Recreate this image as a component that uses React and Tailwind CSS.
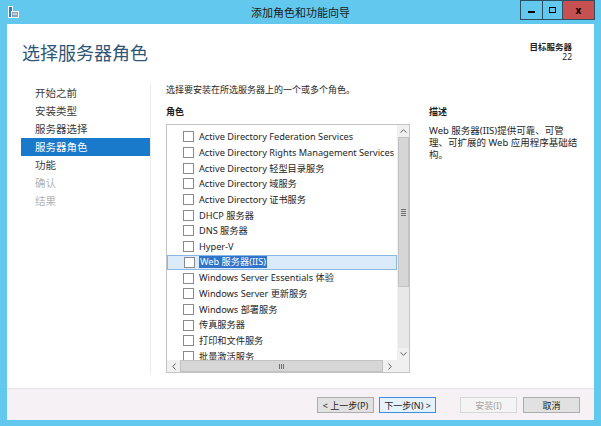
import React from 'react';

const FONT = { fontFamily: '"Noto Sans", "Noto Sans CJK SC", sans-serif' };

const navItems = [
  { label: '开始之前', state: 'normal' },
  { label: '安装类型', state: 'normal' },
  { label: '服务器选择', state: 'normal' },
  { label: '服务器角色', state: 'active' },
  { label: '功能', state: 'normal' },
  { label: '确认', state: 'disabled' },
  { label: '结果', state: 'disabled' },
];

const roles = [
  'Active Directory Federation Services',
  'Active Directory Rights Management Services',
  'Active Directory 轻型目录服务',
  'Active Directory 域服务',
  'Active Directory 证书服务',
  'DHCP 服务器',
  'DNS 服务器',
  'Hyper-V',
  'Web 服务器(IIS)',
  'Windows Server Essentials 体验',
  'Windows Server 更新服务',
  'Windows 部署服务',
  '传真服务器',
  '打印和文件服务',
  '批量激活服务',
];

const TitleBar = () => (
  <div className="relative h-[24px] flex items-center justify-center">
    {/* app icon */}
    <svg className="absolute left-[8px] top-[6px]" width="11" height="12" viewBox="0 0 11 12">
      <rect x="0.5" y="0.5" width="4" height="11" fill="#2b7fd0" stroke="#ffffff" strokeWidth="1" />
      <rect x="3.5" y="5.5" width="7" height="6" fill="#8aa3b8" stroke="#ffffff" strokeWidth="1" />
      <rect x="5" y="7.5" width="4" height="1" fill="#ffffff" />
    </svg>
    <span className="text-[11px] text-[#1a1a1a] leading-none mt-[1px]">添加角色和功能向导</span>
    <div className="absolute right-[6px] top-0 flex h-[20px]">
      <div className="w-[22px] h-full border border-[#2d4f66] border-r-0 flex items-center justify-center">
        <div className="w-[7px] h-[2px] bg-black mt-[3px]" />
      </div>
      <div className="w-[20px] h-full border border-[#2d4f66] border-r-0 flex items-center justify-center">
        <div className="w-[7px] h-[6px] border-[1.5px] border-black" />
      </div>
      <div className="w-[33px] h-full border border-[#2d4f66] bg-[#c75050] flex items-center justify-center">
        <span className="text-[10px] font-bold text-black leading-none">x</span>
      </div>
    </div>
  </div>
);

const Checkbox = () => (
  <div className="w-[11px] h-[11px] border border-[#8a8a8a] bg-white shrink-0" />
);

const RoleList = () => (
  <div className="w-[244px] h-[249px] border border-[#c4c4c4] flex flex-col">
    <div className="flex flex-1 min-h-0">
      <div className="flex-1 overflow-hidden pt-[4px]">
        {roles.map((r, i) => {
          const sel = i === 8;
          return (
            <div
              key={r}
              className={`h-[15.7px] flex items-center pl-[16px] whitespace-nowrap ${sel ? 'bg-[#dcebfa] border border-[#8ab8e6] pl-[15px]' : ''}`}
            >
              <Checkbox />
              {sel ? (
                <span className="ml-[4px] px-[1px] bg-[#3173c8] text-white text-[9.2px] leading-[12px]">{r}</span>
              ) : (
                <span className="ml-[5px] text-[9.2px] text-[#1e1e1e] leading-none">{r}</span>
              )}
            </div>
          );
        })}
      </div>
      {/* vertical scrollbar */}
      <div className="w-[12px] bg-[#e8e8e8] flex flex-col border-l border-[#f0f0f0]">
        <div className="h-[12px] bg-[#f0f0f0] flex items-center justify-center">
          <svg width="7" height="4" viewBox="0 0 7 4"><path d="M0.5 3.5 L3.5 0.8 L6.5 3.5" fill="none" stroke="#606060" strokeWidth="1" /></svg>
        </div>
        <div className="h-[150px] bg-[#d6d6d6] border border-[#c2c2c2] flex items-center justify-center">
          <div className="flex flex-col gap-[1px]">
            <div className="w-[5px] h-px bg-[#707070]" />
            <div className="w-[5px] h-px bg-[#707070]" />
            <div className="w-[5px] h-px bg-[#707070]" />
            <div className="w-[5px] h-px bg-[#707070]" />
          </div>
        </div>
        <div className="flex-1" />
        <div className="h-[12px] bg-[#f0f0f0] flex items-center justify-center">
          <svg width="7" height="4" viewBox="0 0 7 4"><path d="M0.5 0.5 L3.5 3.2 L6.5 0.5" fill="none" stroke="#606060" strokeWidth="1" /></svg>
        </div>
      </div>
    </div>
    {/* horizontal scrollbar */}
    <div className="h-[12px] flex">
      <div className="flex-1 flex bg-[#e8e8e8]">
        <div className="w-[13px] bg-[#f0f0f0] flex items-center justify-center">
          <svg width="4" height="7" viewBox="0 0 4 7"><path d="M3.5 0.5 L0.8 3.5 L3.5 6.5" fill="none" stroke="#606060" strokeWidth="1" /></svg>
        </div>
        <div className="flex-1 bg-[#d6d6d6] border border-[#c2c2c2] flex items-center justify-center">
          <div className="flex gap-[1px]">
            <div className="w-px h-[5px] bg-[#707070]" />
            <div className="w-px h-[5px] bg-[#707070]" />
            <div className="w-px h-[5px] bg-[#707070]" />
          </div>
        </div>
        <div className="w-[14px] bg-[#f0f0f0] flex items-center justify-center">
          <svg width="4" height="7" viewBox="0 0 4 7"><path d="M0.5 0.5 L3.2 3.5 L0.5 6.5" fill="none" stroke="#606060" strokeWidth="1" /></svg>
        </div>
      </div>
      <div className="w-[12px] bg-[#f0f0f0]" />
    </div>
  </div>
);

const Button = ({ children, variant }) => {
  const styles = {
    normal: 'bg-[#e1e1e1] border-[#adadad] text-[#1e1e1e]',
    focus: 'bg-[#e5f1fb] border-[#3c8ee0] text-[#1e1e1e]',
    disabled: 'bg-[#f4f4f4] border-[#d6d6d6] text-[#a3a3a3]',
  };
  return (
    <div className={`w-[57px] h-[16px] border flex items-center justify-center text-[9px] leading-none ${styles[variant]}`}>
      {children}
    </div>
  );
};

export default function App() {
  return (
    <div className="w-[601px] h-[426px] bg-[#62c8ee] flex flex-col overflow-hidden" style={FONT}>
      <TitleBar />
      <div className="mx-[7px] flex-1 bg-white flex flex-col min-h-0">
        {/* header */}
        <div className="flex justify-between items-start pt-[17px] pl-[15px] pr-[22px]">
          <h1 className="text-[18px] leading-[24px] text-[#2f5677] font-normal">选择服务器角色</h1>
          <div className="mt-[1px] text-right text-[8.5px] leading-[10px] text-[#1e1e1e]">
            <div className="font-semibold">目标服务器</div>
            <div>22</div>
          </div>
        </div>

        {/* body */}
        <div className="flex flex-1 min-h-0 mt-[18px]">
          <nav className="w-[143px] pl-[14px] pt-px">
            {navItems.map((n) => (
              <div
                key={n.label}
                className={`h-[18px] flex items-center pl-[14px] text-[10.5px] leading-none ${
                  n.state === 'active'
                    ? 'bg-[#1979ca] text-white'
                    : n.state === 'disabled'
                    ? 'text-[#b4b4b4]'
                    : 'text-[#3c3c3c]'
                }`}
              >
                {n.label}
              </div>
            ))}
          </nav>
          <div className="w-px bg-[#ececec] mb-[14px]" />
          <div className="flex-1 pl-[15px] pt-[1px]">
            <div className="text-[9px] leading-[12px] text-[#1e1e1e]">选择要安装在所选服务器上的一个或多个角色。</div>
            <div className="flex mt-[10px]">
              <div>
                <div className="text-[9px] leading-[12px] font-semibold text-[#1e1e1e] mb-[6px]">角色</div>
                <RoleList />
              </div>
              <div className="ml-[19px] w-[150px]">
                <div className="text-[9px] leading-[12px] font-semibold text-[#1e1e1e] mb-[7px]">描述</div>
                <p className="text-[9.5px] leading-[11.8px] text-[#1e1e1e] whitespace-nowrap">
                  Web 服务器(IIS)提供可靠、可管
                  <br />
                  理、可扩展的 Web 应用程序基础结
                  <br />
                  构。
                </p>
              </div>
            </div>
          </div>
        </div>

        {/* footer */}
        <div className="h-[32px] bg-[#f5f1f5] border-t border-[#e4e4e4] flex items-start pt-[8px] pr-[14px] justify-end">
          <Button variant="normal">&lt; 上一步(P)</Button>
          <div className="w-[5px]" />
          <Button variant="focus">下一步(N) &gt;</Button>
          <div className="w-[24px]" />
          <Button variant="disabled">安装(I)</Button>
          <div className="w-[6px]" />
          <Button variant="normal">取消</Button>
        </div>
      </div>
      <div className="h-[6px]" />
    </div>
  );
}
